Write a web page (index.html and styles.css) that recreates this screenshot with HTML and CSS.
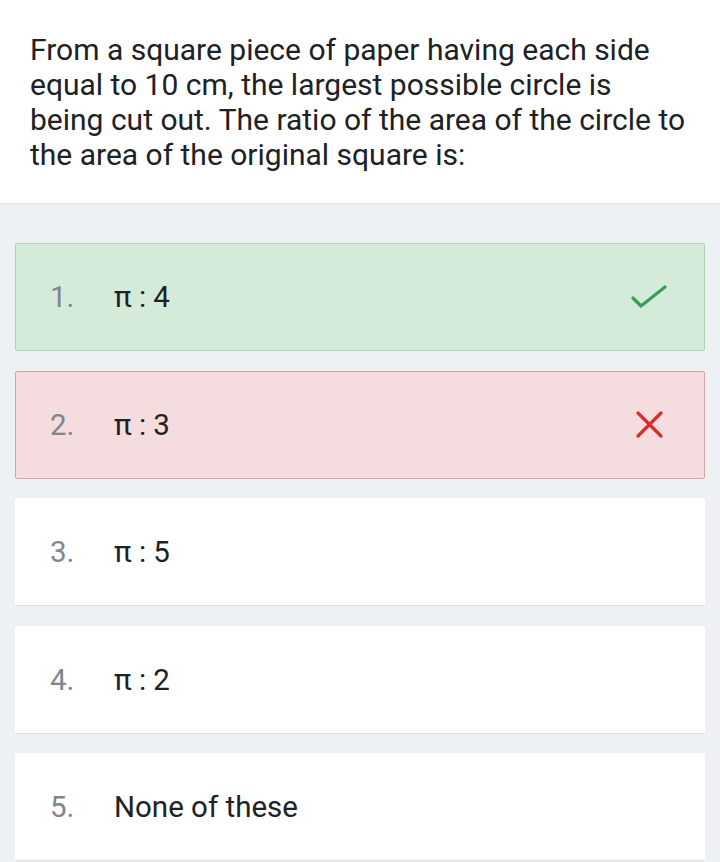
FILE: index.html
```html
<!DOCTYPE html>
<html>
<head>
<meta charset="utf-8">
<link rel="stylesheet" href="styles.css">
</head>
<body>
<div class="question">From a square piece of paper having each side equal to 10 cm, the largest possible circle is being cut out. The ratio of the area of the circle to the area of the original square is:</div>
<div class="options">
  <div class="opt correct">
    <span class="num">1.</span><span class="txt">π : 4</span>
    <svg class="icon" width="40" height="30" viewBox="0 0 40 30"><path d="M4 16 L12 24 L36 5" fill="none" stroke="#34a05a" stroke-width="3.2" stroke-linecap="round" stroke-linejoin="round"/></svg>
  </div>
  <div class="opt wrong">
    <span class="num">2.</span><span class="txt">π : 3</span>
    <svg class="icon" width="40" height="30" viewBox="0 0 40 30"><path d="M9 3 L32 26 M32 3 L9 26" fill="none" stroke="#d3302a" stroke-width="3.2" stroke-linecap="round"/></svg>
  </div>
  <div class="opt">
    <span class="num">3.</span><span class="txt">π : 5</span>
  </div>
  <div class="opt">
    <span class="num">4.</span><span class="txt">π : 2</span>
  </div>
  <div class="opt">
    <span class="num">5.</span><span class="txt">None of these</span>
  </div>
</div>
</body>
</html>
```
FILE: styles.css
```css
html, body {
  margin: 0;
  padding: 0;
}
body {
  width: 720px;
  height: 862px;
  overflow: hidden;
  background: #edf1f4;
  font-family: Roboto, "Noto Sans", sans-serif;
  color: #202124;
}
.question {
  background: #ffffff;
  padding: 32px 32px 29px 30px;
  font-size: 30px;
  line-height: 35px;
  height: 142px;
  border-bottom: 1px solid #dde1e5;
}
.options {
  padding: 39px 15px 0 15px;
  display: flex;
  flex-direction: column;
  gap: 19.5px;
}
.opt {
  height: 108px;
  box-sizing: border-box;
  background: #ffffff;
  border: 1px solid transparent;
  border-bottom-color: #d9dde1;
  border-radius: 2px;
  display: flex;
  align-items: center;
  padding: 0 35px 0 34px;
  font-size: 29.5px;
}
.opt.correct {
  background: #d4ebd9;
  border-color: #a9d5b2;
}
.opt.wrong {
  background: #f4dcdf;
  border-color: #dfa0a6;
}
.num {
  color: #80868e;
  width: 64px;
}
.txt {
  flex: 1;
}
```
